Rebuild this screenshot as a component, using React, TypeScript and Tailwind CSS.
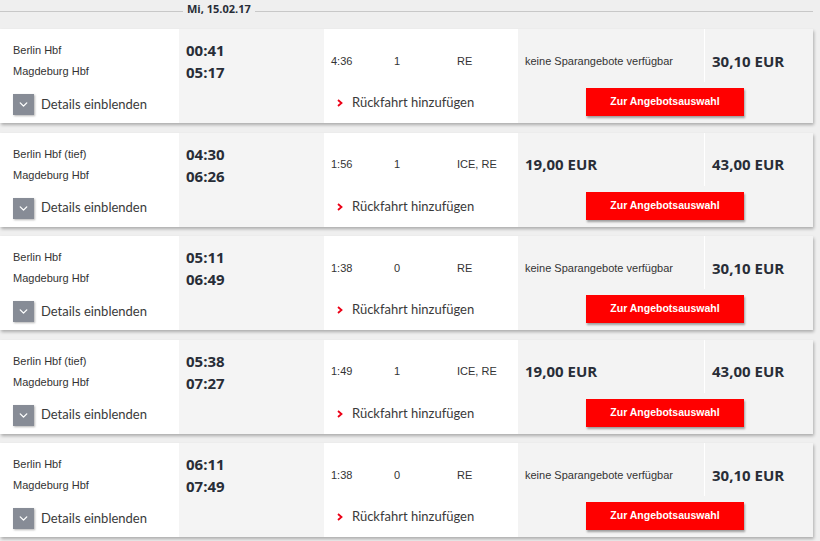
import { ChevronDown } from "lucide-react";

type Trip = {
  from: string;
  to: string;
  dep: string;
  arr: string;
  duration: string;
  changes: string;
  products: string;
  saver: string | null;
  flex: string;
};

const trips: Trip[] = [
  { from: "Berlin Hbf", to: "Magdeburg Hbf", dep: "00:41", arr: "05:17", duration: "4:36", changes: "1", products: "RE", saver: null, flex: "30,10 EUR" },
  { from: "Berlin Hbf (tief)", to: "Magdeburg Hbf", dep: "04:30", arr: "06:26", duration: "1:56", changes: "1", products: "ICE, RE", saver: "19,00 EUR", flex: "43,00 EUR" },
  { from: "Berlin Hbf", to: "Magdeburg Hbf", dep: "05:11", arr: "06:49", duration: "1:38", changes: "0", products: "RE", saver: null, flex: "30,10 EUR" },
  { from: "Berlin Hbf (tief)", to: "Magdeburg Hbf", dep: "05:38", arr: "07:27", duration: "1:49", changes: "1", products: "ICE, RE", saver: "19,00 EUR", flex: "43,00 EUR" },
  { from: "Berlin Hbf", to: "Magdeburg Hbf", dep: "06:11", arr: "07:49", duration: "1:38", changes: "0", products: "RE", saver: null, flex: "30,10 EUR" },
];

const small = "font-['Liberation_Sans',Arial,sans-serif] text-[11px] text-[#333]";
const label = "font-['Lato',sans-serif] text-[13px] text-[#3a3a3a]";
const price = "font-['Open_Sans',sans-serif] font-bold text-[15px] text-[#282d37]";

function TripCard({ trip }: { trip: Trip }) {
  return (
    <div className="flex h-[94px] w-[813px] bg-white shadow-[1px_2px_3px_rgba(0,0,0,0.28)]">
      {/* Stations */}
      <div className="flex w-[179px] flex-col pl-[13px] pt-[11px]">
        <div className={`${small} leading-[21px]`}>{trip.from}</div>
        <div className={`${small} leading-[21px]`}>{trip.to}</div>
        <div className="mt-[12px] flex items-center gap-[7px]">
          <span className="flex h-[21px] w-[21px] items-center justify-center bg-[#878c96] shadow-[1px_1px_2px_rgba(0,0,0,0.3)]">
            <ChevronDown className="h-[13px] w-[13px] text-white" strokeWidth={2.5} />
          </span>
          <span className={label}>Details einblenden</span>
        </div>
      </div>

      {/* Times */}
      <div className="w-[145px] bg-[#f4f4f4] pl-[7px] pt-[10px]">
        <div className={`${price} leading-[22px]`}>{trip.dep}</div>
        <div className={`${price} leading-[22px]`}>{trip.arr}</div>
      </div>

      {/* Duration / changes / products */}
      <div className="flex w-[194px] flex-col">
        <div className={`${small} flex h-[64px] items-center pl-[7px]`}>
          <span className="w-[63px]">{trip.duration}</span>
          <span className="w-[63px]">{trip.changes}</span>
          <span>{trip.products}</span>
        </div>
        <div className="flex h-[19px] items-center pl-[13px] pt-px">
          <svg width="6" height="8" viewBox="0 0 6 8" className="mr-[9px]">
            <polyline points="1,1 4.5,4 1,7" fill="none" stroke="#ec0016" strokeWidth="1.8" />
          </svg>
          <span className={label}>Rückfahrt hinzufügen</span>
        </div>
      </div>

      {/* Prices */}
      <div className="flex flex-1 flex-col bg-[#f3f3f3]">
        <div className="flex h-[53px]">
          <div className="flex w-[187px] items-center border-r border-white pl-[7px] pt-[11px]">
            {trip.saver ? (
              <span className={price}>{trip.saver}</span>
            ) : (
              <span className={`${small} text-[10.8px]`}>keine Sparangebote verfügbar</span>
            )}
          </div>
          <div className="flex items-center pl-[7px] pt-[11px]">
            <span className={price}>{trip.flex}</span>
          </div>
        </div>
        <button className="ml-[68px] mt-[6px] flex h-[28px] w-[158px] items-center justify-center bg-[#ff0000] font-['Liberation_Sans',Arial,sans-serif] text-[10.5px] font-bold text-white shadow-[1px_2px_2px_rgba(0,0,0,0.35)]">
          Zur Angebotsauswahl
        </button>
      </div>
    </div>
  );
}

export default function App() {
  return (
    <div className="min-h-[541px] w-[820px] bg-[#efefef]">
      {/* Date divider */}
      <div className="flex h-[23px] w-[813px] items-center">
        <div className="h-px w-[183px] bg-[#c8c8c8]" />
        <span className="mb-[4px] px-[4px] font-['Open_Sans',sans-serif] text-[11px] font-bold text-[#282d37]">
          Mi, 15.02.17
        </span>
        <div className="h-px flex-1 bg-[#c8c8c8]" />
      </div>

      <div className="mt-[6px] flex flex-col gap-[9.5px]">
        {trips.map((t, i) => (
          <TripCard key={i} trip={t} />
        ))}
      </div>
    </div>
  );
}
